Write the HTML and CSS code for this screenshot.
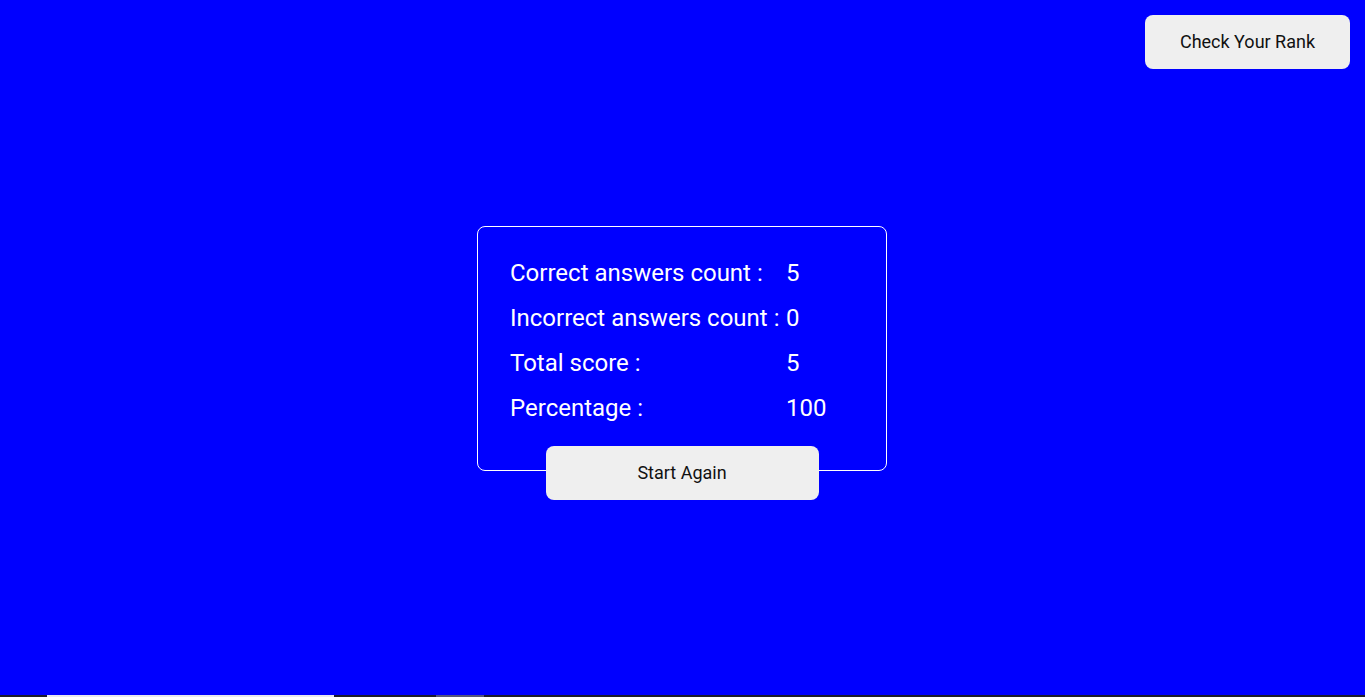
FILE: index.html
```html
<!DOCTYPE html>
<html lang="en">
<head>
<meta charset="utf-8">
<title>Quiz Result</title>
<link rel="stylesheet" href="styles.css">
</head>
<body>
<div class="page">
  <button class="rank-btn">Check Your Rank</button>
  <section class="result-card">
    <div class="rows">
      <span class="label">Correct answers count :</span><span class="value">5</span>
      <span class="label">Incorrect answers count :</span><span class="value">0</span>
      <span class="label">Total score :</span><span class="value">5</span>
      <span class="label">Percentage :</span><span class="value">100</span>
    </div>
    <button class="again-btn">Start Again</button>
  </section>
  <div class="strip"><span class="seg seg-a"></span><span class="seg seg-b"></span></div>
</div>
</body>
</html>
```
FILE: styles.css
```css
html, body {
  margin: 0;
  padding: 0;
}
body {
  background: #0000ff;
  font-family: Roboto, "Liberation Sans", sans-serif;
}
.page {
  height: 100vh;
  box-sizing: border-box;
  display: grid;
  grid-template: 1fr / 1fr;
  overflow: hidden;
}
.page > * {
  grid-area: 1 / 1;
}
.rank-btn {
  justify-self: end;
  align-self: start;
  margin: 15px 15px 0 0;
  padding: 0 0 2px;
  width: 205px;
  height: 54px;
  border: none;
  border-radius: 8px;
  background: #efefef;
  color: #111;
  font-family: Roboto, "Liberation Sans", sans-serif;
  font-size: 18px;
}
.result-card {
  justify-self: center;
  align-self: center;
  margin: 0 1px 0 0;
  width: 410px;
  box-sizing: border-box;
  border: 1px solid #fff;
  border-radius: 8px;
  padding: 32px 32px 0;
  display: flex;
  flex-direction: column;
  align-items: center;
}
.rows {
  align-self: stretch;
  display: grid;
  grid-template-columns: 276px auto;
  row-gap: 17px;
  color: #fff;
  font-size: 24px;
  line-height: 28px;
  white-space: nowrap;
}
.again-btn {
  margin-top: 24px;
  margin-bottom: -30px;
  padding: 0 0 1px;
  width: 273px;
  height: 54px;
  border: none;
  border-radius: 8px;
  background: #efefef;
  color: #111;
  font-family: Roboto, "Liberation Sans", sans-serif;
  font-size: 18px;
}
.strip {
  align-self: end;
  height: 2px;
  background: #1c1c2c;
  display: flex;
}
.seg {
  height: 2px;
}
.seg-a {
  margin-left: 47px;
  width: 287px;
  background: #e8e8f0;
}
.seg-b {
  margin-left: 102px;
  width: 48px;
  background: #55557a;
}
```
